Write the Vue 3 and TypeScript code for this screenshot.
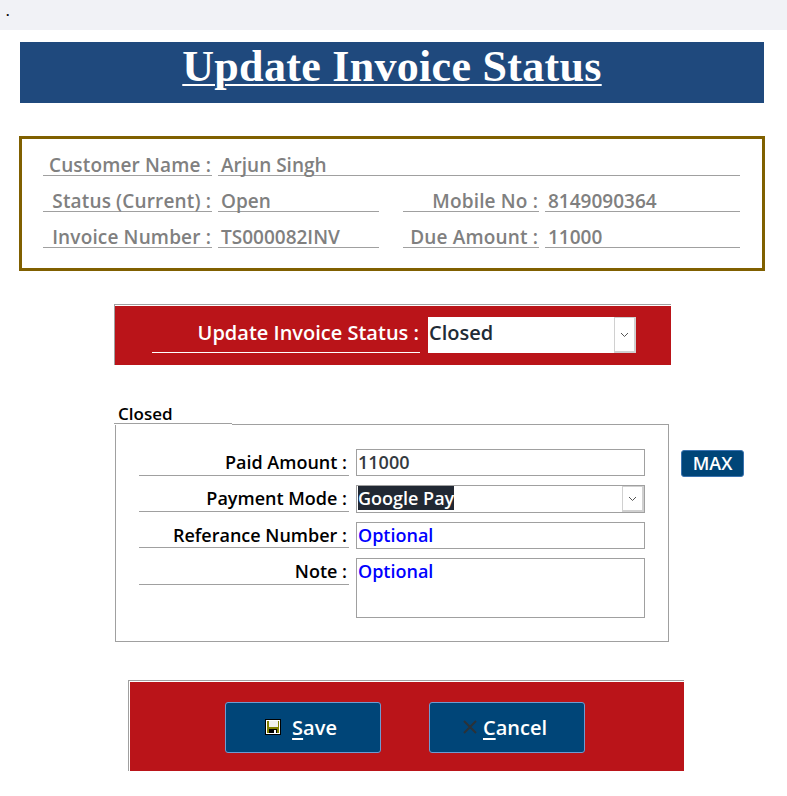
<template>
  <div class="page">
    <div class="topbar">.</div>

    <h1 class="banner"><span>Update Invoice Status</span></h1>

    <section class="summary">
      <div class="summary-row wide">
        <div class="cell label">{{ customer.label }}</div>
        <div class="cell">{{ customer.value }}</div>
      </div>
      <div v-for="row in summaryRows" :key="row[0]" class="summary-row">
        <div class="cell label">{{ row[0] }}</div>
        <div class="cell">{{ row[1] }}</div>
        <div class="cell label">{{ row[2] }}</div>
        <div class="cell">{{ row[3] }}</div>
      </div>
    </section>

    <section class="band status-band">
      <div class="band-fill status-fill">
        <div class="status-label">Update Invoice Status :</div>
        <div class="status-select">
          <span>Closed</span>
          <div class="drop-btn">
            <svg width="9" height="6" viewBox="0 0 9 6"><path d="M1 1l3.5 3.5L8 1" fill="none" stroke="#555" stroke-width="1" /></svg>
          </div>
        </div>
      </div>
    </section>

    <div class="legend">Closed</div>

    <div class="form-wrap">
      <section class="form-box">
        <div class="form-row">
          <div class="form-label">Paid Amount :</div>
          <div class="field">11000</div>
        </div>
        <div class="form-row">
          <div class="form-label">Payment Mode :</div>
          <div class="field select">
            <span class="selected">Google Pay</span>
            <div class="drop-btn">
              <svg width="9" height="6" viewBox="0 0 9 6"><path d="M1 1l3.5 3.5L8 1" fill="none" stroke="#555" stroke-width="1" /></svg>
            </div>
          </div>
        </div>
        <div class="form-row">
          <div class="form-label">Referance Number :</div>
          <div class="field optional">Optional</div>
        </div>
        <div class="form-row note">
          <div class="form-label">Note :</div>
          <div class="field optional area">Optional</div>
        </div>
      </section>
      <div class="max-btn">MAX</div>
    </div>

    <section class="band actions">
      <div class="band-fill actions-fill">
        <div class="action-btn">
          <svg class="save-icon" width="16" height="16" viewBox="0 0 16 16">
            <rect width="16" height="16" fill="#000" />
            <rect x="1" y="1" width="14" height="14" fill="#fff" />
            <rect x="2" y="2" width="12" height="12" fill="#808000" />
            <rect x="4" y="2" width="9" height="6" fill="#f0f0f0" />
            <rect x="4" y="10" width="8" height="4" fill="#000" />
            <rect x="9" y="11" width="2" height="3" fill="#fff" />
          </svg>
          <span class="action-text"><u>S</u>ave</span>
        </div>
        <div class="action-btn">
          <svg class="cancel-icon" width="14" height="14" viewBox="0 0 14 14">
            <path d="M1 1l12 12M13 1L1 13" fill="none" stroke="#2b3238" stroke-width="2" />
          </svg>
          <span class="action-text"><u>C</u>ancel</span>
        </div>
      </div>
    </section>
  </div>
</template>

<script setup lang="ts">
const customer = { label: 'Customer Name :', value: 'Arjun Singh' };

const summaryRows: string[][] = [
  ['Status (Current) :', 'Open', 'Mobile No :', '8149090364'],
  ['Invoice Number :', 'TS000082INV', 'Due Amount :', '11000'],
];
</script>

<style>
body {
  margin: 0;
  background: #fff;
}
</style>

<style scoped>
.page {
  width: 787px;
  height: 796px;
  overflow: hidden;
  font-family: "Open Sans", "Noto Sans", sans-serif;
  font-weight: 600;
  color: #000;
}

.topbar {
  height: 30px;
  padding-left: 6px;
  box-sizing: border-box;
  background: #f1f2f6;
  font-size: 12px;
  line-height: 24px;
  font-weight: 700;
}

.banner {
  margin: 12px 0 0 20px;
  width: 744px;
  height: 61px;
  background: #1f497d;
  color: #fff;
  text-align: center;
  font-family: "Liberation Serif", serif;
  font-weight: 700;
  font-size: 44px;
  line-height: 50px;
  letter-spacing: 0.3px;
}

.banner span {
  text-decoration: underline;
  text-decoration-thickness: 2px;
  text-underline-offset: 3px;
}

.summary {
  margin: 33px 0 0 19px;
  width: 746px;
  height: 135px;
  box-sizing: border-box;
  border: 3px solid #806000;
  padding: 1px 0 0 21px;
  color: #808080;
  font-size: 19px;
}

.summary-row {
  display: grid;
  grid-template-columns: 169px 161px 154px 195px;
  column-gap: 6px;
  height: 36px;
  align-items: end;
}

.summary-row > :nth-child(3) {
  margin-left: 18px;
}

.summary-row.wide {
  grid-template-columns: 169px 522px;
}

.cell {
  height: 24px;
  line-height: 27px;
  box-sizing: border-box;
  border-bottom: 1px solid #a0a0a0;
  padding-left: 3px;
  white-space: nowrap;
}

.cell.label {
  text-align: right;
  padding: 0 1px 0 0;
  letter-spacing: 0.15px;
}

.band {
  box-sizing: border-box;
  border-top: 1px solid #a0a0a0;
  border-left: 1px solid #a0a0a0;
  padding: 1px 0 0 1px;
}

.band-fill {
  height: 100%;
  box-sizing: border-box;
  background: #ba1419;
  display: flex;
  align-items: flex-start;
}

.status-band {
  margin: 33px 0 0 114px;
  width: 557px;
  height: 61px;
  padding-left: 0;
}

.status-fill {
  padding: 11px 0 0 37px;
  font-size: 20px;
}

.status-label {
  width: 268px;
  height: 36px;
  box-sizing: border-box;
  border-bottom: 1px solid #fff;
  color: #fff;
  text-align: right;
  line-height: 32px;
  padding-right: 1px;
  white-space: nowrap;
}

.status-select {
  margin-left: 8px;
  width: 208px;
  height: 36px;
  background: #fff;
  display: flex;
  justify-content: space-between;
  color: #212b36;
  line-height: 32px;
  padding-left: 1px;
  box-sizing: border-box;
}

.drop-btn {
  width: 22px;
  box-sizing: border-box;
  border: 1px solid #d0d0d0;
  border-bottom-width: 2px;
  border-right-width: 2px;
  display: flex;
  align-items: center;
  justify-content: center;
  background: #fff;
}

.legend {
  position: relative;
  z-index: 1;
  margin: 40px 0 0 114px;
  width: 118px;
  height: 19px;
  box-sizing: border-box;
  padding-left: 4px;
  border-bottom: 1px solid #a0a0a0;
  box-shadow: 0 1px 0 #fff;
  line-height: 17px;
  font-size: 17px;
}

.form-wrap {
  display: flex;
  align-items: flex-start;
  margin-left: 115px;
}

.form-box {
  width: 554px;
  height: 218px;
  box-sizing: border-box;
  border: 1px solid #a0a0a0;
  padding: 24px 23px 0 23px;
}

.form-row {
  display: flex;
  align-items: flex-start;
  margin-bottom: 9px;
  gap: 7px;
  font-size: 18px;
}

.form-label {
  width: 210px;
  height: 27px;
  box-sizing: border-box;
  border-bottom: 1px solid #a0a0a0;
  text-align: right;
  line-height: 26px;
  padding-right: 2px;
  white-space: nowrap;
}

.form-row:nth-child(3) .form-label {
  height: 26px;
}

.field {
  width: 289px;
  height: 27px;
  box-sizing: border-box;
  border: 1px solid #a0a0a0;
  padding-left: 1px;
  line-height: 24px;
  color: #343a40;
  white-space: nowrap;
}

.field.select {
  height: 28px;
  display: flex;
  justify-content: space-between;
}

.selected {
  background: #212833;
  color: #fff;
  height: 24px;
}

.optional {
  color: #0000ff;
}

.field.area {
  height: 60px;
}

.max-btn {
  margin: 26px 0 0 12px;
  width: 63px;
  height: 27px;
  box-sizing: border-box;
  border: 1px solid #3a73b0;
  border-radius: 3px;
  background: #004578;
  color: #fff;
  font-size: 18px;
  line-height: 25px;
  text-align: center;
}

.actions {
  margin: 38px 0 0 128px;
  width: 556px;
  height: 91px;
}

.actions-fill {
  gap: 48px;
  padding: 20px 0 0 95px;
}

.action-btn {
  width: 156px;
  height: 51px;
  box-sizing: border-box;
  border: 1px solid #6f9bd1;
  border-radius: 3px;
  padding-right: 4px;
  background: #004578;
  color: #fff;
  font-size: 20px;
  display: flex;
  align-items: center;
  justify-content: center;
}

.save-icon {
  margin-right: 11px;
  margin-bottom: 2px;
}

.cancel-icon {
  margin-right: 6px;
  margin-bottom: 2px;
}

.action-text {
  line-height: 48px;
}

.action-text u {
  text-underline-offset: 3px;
}
</style>
